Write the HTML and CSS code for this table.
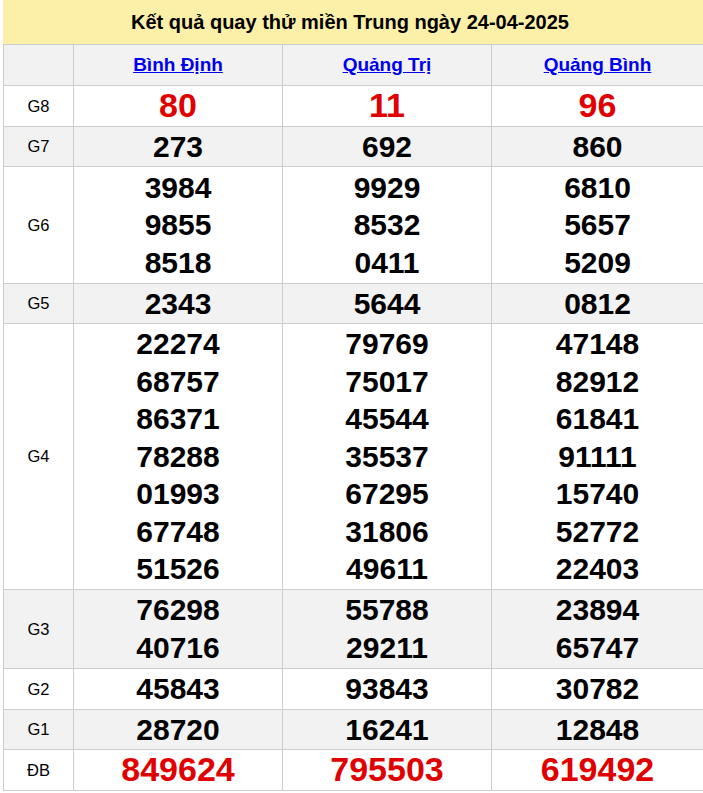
FILE: index.html
```html
<!DOCTYPE html>
<html lang="vi">
<head>
<meta charset="utf-8">
<title>Kết quả quay thử miền Trung</title>
<link rel="stylesheet" href="styles.css">
</head>
<body>
<div class="wrap">
  <div class="title">Kết quả quay thử miền Trung ngày 24-04-2025</div>
  <table class="kq">
    <colgroup><col class="c0"><col class="c1"><col class="c2"><col class="c3"></colgroup>
    <tr class="head gray">
      <td></td>
      <td><a href="#">Bình Định</a></td>
      <td><a href="#">Quảng Trị</a></td>
      <td><a href="#">Quảng Bình</a></td>
    </tr>
    <tr class="red">
      <td class="lb">G8</td><td>80</td><td>11</td><td>96</td>
    </tr>
    <tr class="gray">
      <td class="lb">G7</td><td>273</td><td>692</td><td>860</td>
    </tr>
    <tr class="g6">
      <td class="lb">G6</td>
      <td>3984<br>9855<br>8518</td>
      <td>9929<br>8532<br>0411</td>
      <td>6810<br>5657<br>5209</td>
    </tr>
    <tr class="gray">
      <td class="lb">G5</td><td>2343</td><td>5644</td><td>0812</td>
    </tr>
    <tr>
      <td class="lb">G4</td>
      <td>22274<br>68757<br>86371<br>78288<br>01993<br>67748<br>51526</td>
      <td>79769<br>75017<br>45544<br>35537<br>67295<br>31806<br>49611</td>
      <td>47148<br>82912<br>61841<br>91111<br>15740<br>52772<br>22403</td>
    </tr>
    <tr class="gray g3">
      <td class="lb">G3</td>
      <td>76298<br>40716</td>
      <td>55788<br>29211</td>
      <td>23894<br>65747</td>
    </tr>
    <tr>
      <td class="lb">G2</td><td>45843</td><td>93843</td><td>30782</td>
    </tr>
    <tr class="gray">
      <td class="lb">G1</td><td>28720</td><td>16241</td><td>12848</td>
    </tr>
    <tr class="red db">
      <td class="lb">ĐB</td><td>849624</td><td>795503</td><td>619492</td>
    </tr>
  </table>
</div>
</body>
</html>
```
FILE: styles.css
```css
html, body {
  margin: 0;
  padding: 0;
  background: #fff;
}
body {
  font-family: "Liberation Sans", Arial, sans-serif;
  color: #000;
}
.wrap {
  margin-left: 3px;
  width: 700px;
}
.title {
  background: #fcf0a8;
  height: 44px;
  line-height: 44px;
  text-align: center;
  font-weight: bold;
  font-size: 20px;
  padding-right: 6px;
}
.kq {
  width: 700px;
  border-collapse: collapse;
  table-layout: fixed;
}
.c0 { width: 70px; }
.c1 { width: 209px; }
.c2 { width: 209px; }
.c3 { width: 212px; }
.kq td {
  border: 1px solid #cccccc;
  text-align: center;
  font-weight: bold;
  font-size: 30px;
  line-height: 37.5px;
  padding: 1px 0;
  vertical-align: middle;
}
.kq tr.g6 td { padding: 1.5px 0; }
.kq tr.g3 td { padding: 1.5px 0 2px; }
.kq tr.gray td { background: #f2f2f2; }
.kq td.lb {
  font-weight: normal;
  font-size: 16.5px;
  line-height: 20px;
}
.kq tr.head td {
  height: 40px;
  line-height: 20px;
  font-size: 19px;
  padding: 0;
}
.kq tr.head a {
  color: #0000ee;
  text-decoration: underline;
}
.kq tr.red td { color: #e00000; font-size: 34px; }
.kq tr.red td.lb { color: #000; font-size: 16.5px; }
```
